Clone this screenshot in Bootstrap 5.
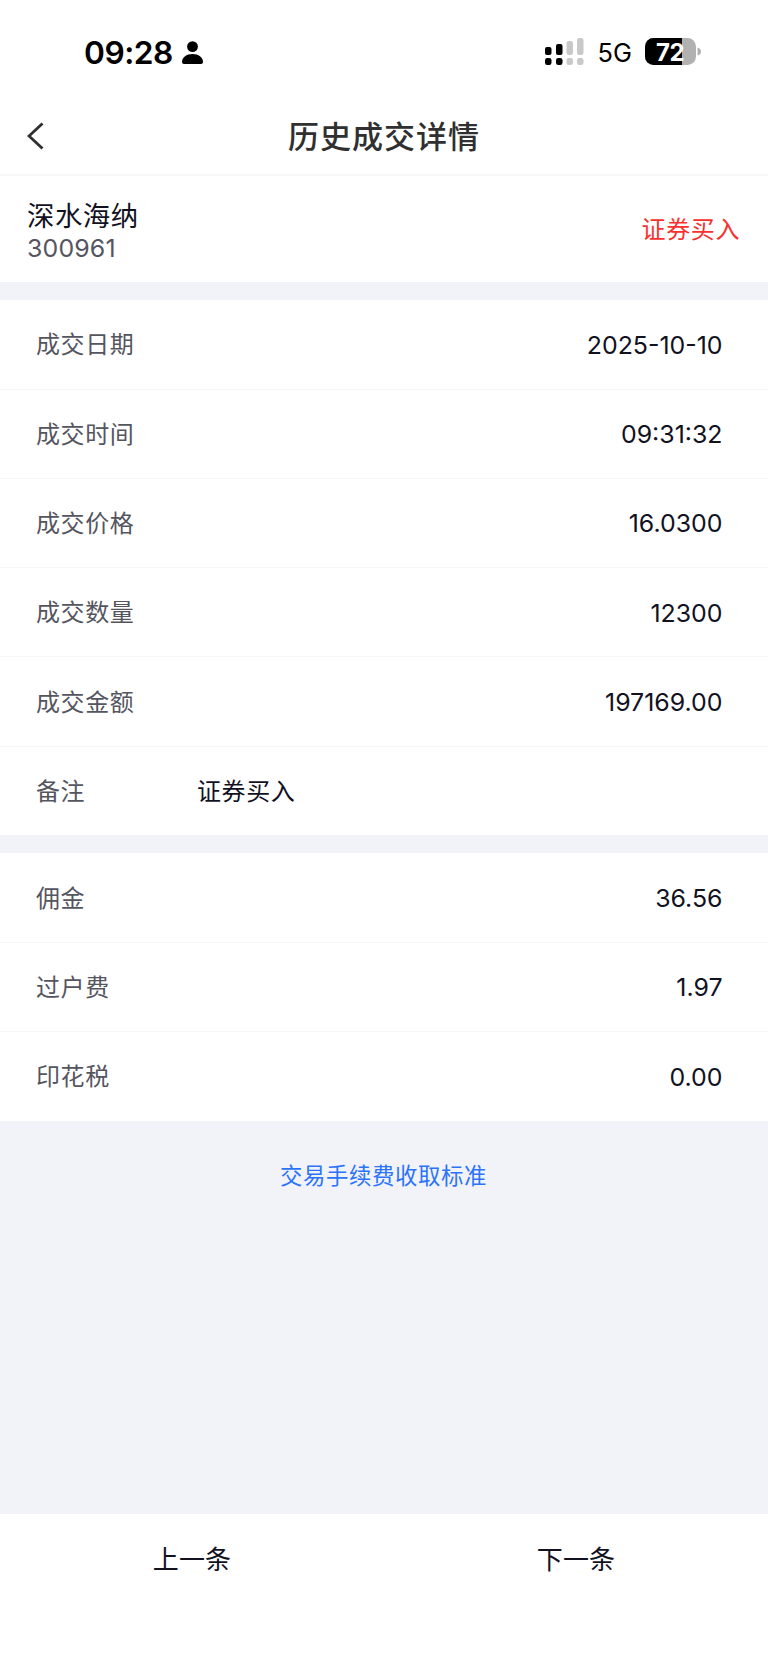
<!DOCTYPE html>
<html lang="zh-CN">
<head>
<meta charset="utf-8">
<meta name="viewport" content="width=device-width, initial-scale=1">
<title>历史成交详情</title>
<link rel="stylesheet" href="https://cdn.jsdelivr.net/npm/bootstrap@5.3.0/dist/css/bootstrap.min.css">
<style>
  :root { --ink:#12121f; --muted:#555560; --panel:#f2f3f8; --hair:#f6f6f7; }
  body { font-family:Inter,"Noto Sans CJK SC",sans-serif; color:var(--ink); background:var(--panel); line-height:1.2; font-size:24.9px; }
  .screen { height:1665px; }
  .status { height:97px; padding:7px 66px 0 84px; color:#000; }
  .clock { font-size:31.7px; font-weight:600; letter-spacing:-.5px; padding-top:2px; }
  .person { margin-top:2px; }
  .net { font-size:25.4px; font-weight:400; letter-spacing:0; margin:2px 13px 0 14px; }
  .battery { font-size:24px; font-weight:700; }
  .topbar { height:79px; padding-top:3px; border-bottom:2px solid #f8f8f9; }
  .topbar h1 { font-size:31px; font-weight:500; letter-spacing:1px; color:#303030; }
  .back { left:27px; top:25px; }
  .stock { height:106px; padding:0 28px 0 27px; }
  .stock-id { margin-top:8px; }
  .stock-name { font-size:27.4px; letter-spacing:.5px; line-height:30px; }
  .stock-code { font-size:24.9px; color:var(--muted); line-height:35px; letter-spacing:.15px; }
  .zh { font-size:24px; letter-spacing:.6px; }
  .buy { color:#f7312f; margin-top:3px; }
  .rows { --bs-list-group-bg:#fff; --bs-list-group-border-color:var(--hair); --bs-list-group-color:var(--ink); }
  .rows .list-group-item { height:89.3px; padding:2.600px 45.500px 0 36px; }
  .rows .list-group-item:first-child { height:89.6px; }
  .rows .list-group-item:last-child { height:88.6px; }
  .rows .zh:first-child { color:var(--muted); width:161px; }
  .spacer { height:18px; }
  .fees { font-size:22.4px; letter-spacing:.6px; color:#2b73fb; padding:42px 1px 0 0; }
  .pager { height:151px; }
  .pager a { color:var(--ink); font-size:26px; letter-spacing:.2px; height:90px; padding-top:2px; }
</style>
</head>
<body>
<div class="screen d-flex flex-column">
  <header class="bg-white">
    <div class="status d-flex align-items-center">
      <span class="clock">09:28</span>
      <svg class="person ms-2" width="23" height="24" viewBox="0 0 23 24"><circle cx="11.5" cy="5.6" r="5.4"/><path d="M1 21c0-4.500 4.500-8 10.500-8s10.500 3.500 10.500 8q0 2-2 2H3q-2 0-2-2z"/></svg>
      <svg class="ms-auto" width="40" height="28" viewBox="0 0 40 28"><g fill="#c9c9c9"><rect x="22.500" y="3" width="6.500" height="14" rx="2.300"/><rect x="33" y="0" width="6.500" height="17" rx="2.300"/><rect x="22.500" y="20" width="6.500" height="7" rx="2.300"/><rect x="33" y="20" width="6.500" height="7" rx="2.300"/></g><rect x="1" y="9" width="6.500" height="8" rx="2"/><rect x="12" y="6" width="6.500" height="11" rx="2"/><rect x="1" y="20" width="6.500" height="7" rx="2.300"/><rect x="12" y="20" width="6.500" height="7" rx="2.300"/></svg>
      <span class="net">5G</span>
      <svg class="battery" width="57" height="28" viewBox="0 0 57 28"><defs><clipPath id="cell"><rect width="51" height="27" rx="8.500"/></clipPath></defs><g clip-path="url(#cell)"><path fill="#b1b1b1" d="M0 0h51v27H0z"/><path d="M0 0h37v27H0z"/></g><path fill="#b1b1b1" d="M52.500 9.500q3.500 1 3.500 4t-3.500 4z"/><text x="25" y="22.500" text-anchor="middle" fill="#fff" letter-spacing="-.5">72</text></svg>
    </div>
    <div class="topbar position-relative d-flex align-items-center justify-content-center">
      <a href="#" class="back position-absolute d-flex" aria-label="返回"><svg width="18" height="28" viewBox="0 0 18 28" fill="none" stroke="#303030" stroke-width="2.900"><path d="M15.500 1.500 2 14l13.500 12.500"/></svg></a>
      <h1 class="m-0">历史成交详情</h1>
    </div>
    <div class="stock d-flex align-items-center justify-content-between">
      <div class="stock-id"><div class="stock-name">深水海纳</div><div class="stock-code">300961</div></div>
      <span class="zh buy">证券买入</span>
    </div>
  </header>
  <div class="spacer"></div>
  <ul class="rows list-group list-group-flush">
    <li class="list-group-item d-flex align-items-center"><span class="zh">成交日期</span><span class="ms-auto">2025-10-10</span></li>
    <li class="list-group-item d-flex align-items-center"><span class="zh">成交时间</span><span class="ms-auto">09:31:32</span></li>
    <li class="list-group-item d-flex align-items-center"><span class="zh">成交价格</span><span class="ms-auto">16.0300</span></li>
    <li class="list-group-item d-flex align-items-center"><span class="zh">成交数量</span><span class="ms-auto">12300</span></li>
    <li class="list-group-item d-flex align-items-center"><span class="zh">成交金额</span><span class="ms-auto">197169.00</span></li>
    <li class="list-group-item d-flex align-items-center"><span class="zh">备注</span><span class="zh">证券买入</span></li>
  </ul>
  <div class="spacer"></div>
  <ul class="rows list-group list-group-flush">
    <li class="list-group-item d-flex align-items-center"><span class="zh">佣金</span><span class="ms-auto">36.56</span></li>
    <li class="list-group-item d-flex align-items-center"><span class="zh">过户费</span><span class="ms-auto">1.97</span></li>
    <li class="list-group-item d-flex align-items-center"><span class="zh">印花税</span><span class="ms-auto">0.00</span></li>
  </ul>
  <a href="#" class="fees text-center text-decoration-none">交易手续费收取标准</a>
  <nav class="pager bg-white d-flex mt-auto">
    <a href="#" class="w-50 d-flex align-items-center justify-content-center text-decoration-none">上一条</a>
    <a href="#" class="w-50 d-flex align-items-center justify-content-center text-decoration-none">下一条</a>
  </nav>
</div>
<script src="https://cdn.jsdelivr.net/npm/bootstrap@5.3.0/dist/js/bootstrap.bundle.min.js"></script>
</body>
</html>
